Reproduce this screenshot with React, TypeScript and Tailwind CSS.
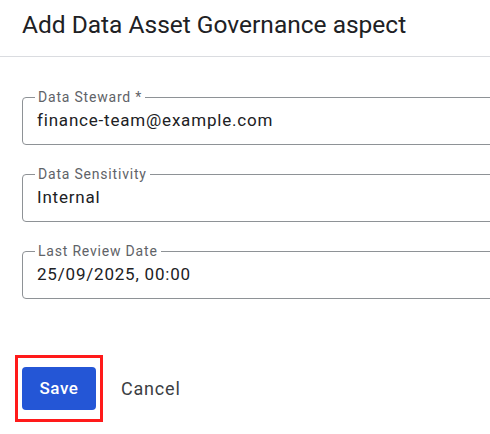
import React from 'react';

interface FieldProps {
  label: string;
  value: string;
}

function OutlinedField({ label, value }: FieldProps) {
  return (
    <fieldset className="w-[480px] rounded-[4px] border border-[#8e9296] pl-[14px] pr-3 pt-[5px] pb-[14px]">
      <legend className="ml-[-2px] px-[3px] text-[14px] leading-[16px] tracking-[0.8px] text-[#5f6368]">
        {label}
      </legend>
      <div className="text-[17px] leading-[20px] tracking-[0.8px] text-[#202124]">
        {value}
      </div>
    </fieldset>
  );
}

export default function App() {
  const fields = [
    { label: 'Data Steward *', value: 'finance-team@example.com' },
    { label: 'Data Sensitivity', value: 'Internal' },
    { label: 'Last Review Date', value: '25/09/2025, 00:00' },
  ];

  return (
    <div
      className="h-[434px] w-[490px] overflow-hidden bg-white"
      style={{ fontFamily: 'Roboto, "Liberation Sans", sans-serif' }}
    >
      {/* Header */}
      <div className="h-[57px] border-b border-[#dadce0] pl-[22px] pt-[9px]">
        <h1 className="text-[24.5px] leading-[32px] text-[#202124]">
          Add Data Asset Governance aspect
        </h1>
      </div>

      {/* Fields */}
      <div className="flex flex-col gap-[21px] pl-[22px] pt-[32px]">
        {fields.map((field) => (
          <OutlinedField key={field.label} {...field} />
        ))}
      </div>

      {/* Actions */}
      <div className="mt-[56px] flex items-center gap-[18px] pl-[15px]">
        <div className="border-[3px] border-[#ff1a1a] px-[4px] py-[9px]">
          <button className="block h-[43px] w-[74px] rounded-[4px] bg-[#2456d6] text-[17px] font-medium tracking-[0.6px] text-white">
            Save
          </button>
        </div>
        <button className="text-[18px] tracking-[0.8px] text-[#3c4043]">
          Cancel
        </button>
      </div>
    </div>
  );
}
